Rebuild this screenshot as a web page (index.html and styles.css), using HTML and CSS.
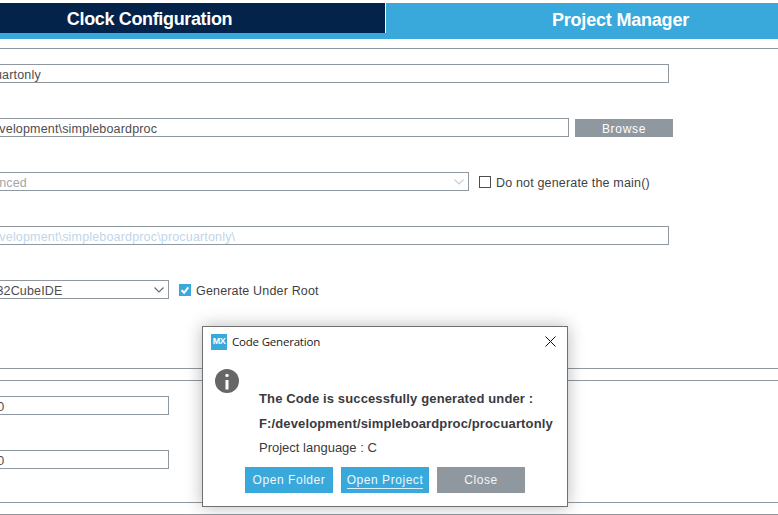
FILE: index.html
```html
<!DOCTYPE html>
<html lang="en">
<head>
<meta charset="utf-8">
<title>Project Manager</title>
<link rel="stylesheet" href="styles.css">
</head>
<body>
<div class="page">
  <header class="tabs">
    <div class="tab tab-clock"><span>Clock Configuration</span></div>
    <div class="tab tab-project"><span>Project Manager</span></div>
  </header>
  <div class="rule rule-top"></div>
  <section class="form">
    <div class="row row-name">
      <div class="box w-669"><span class="val">procuartonly</span></div>
    </div>
    <div class="row row-loc">
      <div class="box w-569"><span class="val">F:\development\simpleboardproc</span></div>
      <button class="browse">Browse</button>
    </div>
    <div class="row row-struct">
      <div class="box w-469 muted"><span class="val">Advanced</span>
        <svg class="chev" width="10" height="6" viewBox="0 0 10 6"><path d="M.5.5L5 5 9.500.5" fill="none" stroke="#c9cbce" stroke-width="1.1"/></svg>
      </div>
      <label class="check"><span class="cb"></span><span class="cap">Do not generate the main()</span></label>
    </div>
    <div class="row row-path">
      <div class="box w-669 faint"><span class="val">F:\development\simpleboardproc\procuartonly\</span></div>
    </div>
    <div class="row row-ide">
      <div class="box w-169"><span class="val val-tight">STM32CubeIDE</span>
        <svg class="chev" width="10" height="6" viewBox="0 0 10 6"><path d="M.5.5L5 5 9.500.5" fill="none" stroke="#6a6a6a" stroke-width="1.1"/></svg>
      </div>
      <label class="check"><span class="cb on"><svg width="12" height="12" viewBox="0 0 12 12"><path d="M2.600 6.200l2.500 2.600 4.200-5.400" fill="none" stroke="#fff" stroke-width="2"/></svg></span><span class="cap">Generate Under Root</span></label>
    </div>
  </section>
  <div class="rule rule-a"></div>
  <div class="rule rule-b"></div>
  <section class="form">
    <div class="row row-heap"><div class="box w-169"><span class="val val-tight">0x200</span></div></div>
    <div class="row row-stack"><div class="box w-169"><span class="val val-tight">0x400</span></div></div>
  </section>
  <div class="rule rule-c"></div>
  <div class="rule rule-d"></div>

  <div class="dialog" role="dialog">
    <div class="dlg-title">
      <span class="mx">MX</span>
      <span class="dlg-name">Code Generation</span>
      <svg class="x" width="11" height="11" viewBox="0 0 11 11"><path d="M.5.5l10 10M10.500.5l-10 10" stroke="#111" stroke-width="1" fill="none"/></svg>
    </div>
    <svg class="info" width="24" height="24" viewBox="0 0 24 24"><circle cx="12" cy="12" r="12" fill="#666"/><circle cx="12" cy="6.400" r="1.700" fill="#fff"/><rect x="10.500" y="11" width="3" height="9.500" fill="#fff"/></svg>
    <div class="msg">
      <p class="strong">The Code is successfully generated under :</p>
      <p class="strong">F:/development/simpleboardproc/procuartonly</p>
      <p class="plain">Project language : C</p>
    </div>
    <div class="actions">
      <button class="btn blue">Open Folder</button>
      <button class="btn blue"><span class="focus">Open Project</span></button>
      <button class="btn grey">Close</button>
    </div>
  </div>
</div>
</body>
</html>
```
FILE: styles.css
```css
* { box-sizing: border-box; }
html, body { margin: 0; padding: 0; background: #fff; }
body { font-family: "Liberation Sans", Arial, sans-serif; color: #4d4d4f; }
.page { position: relative; width: 778px; height: 515px; overflow: hidden; padding-top: 3px; }

.tabs { display: flex; height: 36px; background: #39a9dc; }
.tab { display: flex; justify-content: center; color: #fff; font-size: 18px; font-weight: bold; }
.tab-clock { width: 385px; height: 30px; background: #03234b; padding-right: 86px; line-height: 33px; letter-spacing: -.35px; box-shadow: 1px 0 0 #fff; }
.tab-project { flex: 1; margin-left: 1px; padding-left: 77px; line-height: 34px; letter-spacing: -.2px; }

.rule { height: 1px; background: #90989f; }
.rule-top { margin-top: 9px; }
.form { display: flex; flex-direction: column; }
.rule-b { margin-top: 11px; }
.rule-c { margin-top: 33px; }
.rule-d { margin-top: 11px; }

.row { display: flex; align-items: center; height: 19px; }
.row-name { margin-top: 15px; }
.row-loc, .row-struct, .row-path, .row-ide { margin-top: 35px; }
.row-ide { margin-bottom: 69px; }
.row-heap { margin-top: 15px; }
.row-stack { margin-top: 35px; }

.box { position: relative; display: flex; align-items: center; height: 19px; padding-top: 2px; border: 1px solid #90989f; border-left: 0; font-size: 12.500px; letter-spacing: .17px; color: #4d4d4f; white-space: nowrap; overflow: hidden; }
.w-669 { width: 669px; }
.w-569 { width: 569px; }
.w-469 { width: 469px; }
.w-169 { width: 169px; }
.muted { color: #a2a6aa; }
.faint { color: #c0d6ea; }

.val { margin-left: -30px; }
.val-tight { margin-left: -30.500px; }

.chev { position: absolute; right: 4px; top: 6px; }

.browse { width: 98px; height: 18px; margin-left: 6px; border: 0; padding: 2px 0 0; background: #90989f; color: #fff; font: 12px "Liberation Sans", Arial, sans-serif; letter-spacing: .7px; }

.check { display: flex; align-items: center; margin-left: 10px; font-size: 12.500px; letter-spacing: .17px; color: #3f3f46; }
.cb { display: block; width: 12px; height: 12px; margin-right: 5px; border: 1px solid #4d4d4f; }
.cb.on { border: 0; background: #39a9dc; }
.cb svg { display: block; }
.cap { padding-top: 2px; }

.dialog { position: absolute; left: 202px; top: 326px; width: 366px; height: 181px; background: #fff; border: 1px solid #707070; box-shadow: 0 0 16px rgba(0,0,0,.28); }
.dlg-title { display: flex; align-items: center; height: 29px; padding: 0 11px 0 8px; }
.mx { width: 16px; height: 16px; background: #39a9dc; color: #fff; font-size: 9px; font-weight: bold; letter-spacing: -.5px; line-height: 15px; text-align: center; }
.dlg-name { margin-left: 5px; font: 11.500px "Open Sans", "Noto Sans", sans-serif; letter-spacing: -.2px; color: #1a1a1a; flex: 1; }
.info { position: absolute; left: 12px; top: 42px; }
.msg { position: absolute; left: 56px; top: 60px; }
.msg p { margin: 0; height: 24.500px; font-size: 13px; line-height: 24px; white-space: nowrap; color: #3a3a40; }
.strong { font-weight: bold; letter-spacing: .13px; }
.actions { position: absolute; left: 42px; top: 140px; display: flex; gap: 8px; }
.btn { width: 88px; height: 26px; border: 0; padding: 0; color: #f2f6f8; font: 12px "Liberation Sans", Arial, sans-serif; letter-spacing: .55px; }
.blue { background: #39a9dc; }
.grey { background: #90989f; }
.focus { display: inline-block; line-height: 16px; border-bottom: 1px solid #d8eef8; }
```
